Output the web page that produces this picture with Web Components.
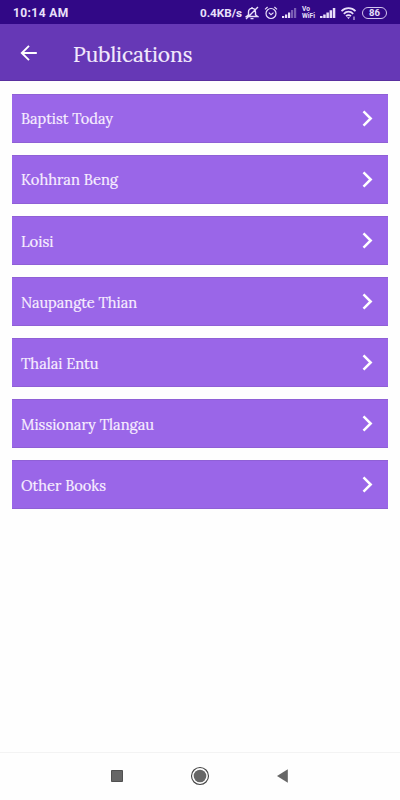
<!DOCTYPE html>
<html lang="en">
<head>
<meta charset="utf-8">
<title>Publications</title>
<style>
  body {
    margin: 0;
    background: #fefefe;
    font-family: Lora, "Liberation Serif", serif;
  }
</style>
</head>
<body>
<phone-screen>
  <status-bar slot="top" time="10:14 AM" speed="0.4KB/s" battery="86"></status-bar>
  <app-bar slot="top"><fit-text width="119.5">Publications</fit-text></app-bar>
  <list-item><fit-text width="92">Baptist Today</fit-text></list-item>
  <list-item><fit-text width="97">Kohhran Beng</fit-text></list-item>
  <list-item><fit-text width="32.5">Loisi</fit-text></list-item>
  <list-item><fit-text width="116">Naupangte Thian</fit-text></list-item>
  <list-item><fit-text width="77.5">Thalai Entu</fit-text></list-item>
  <list-item><fit-text width="133">Missionary Tlangau</fit-text></list-item>
  <list-item><fit-text width="85">Other Books</fit-text></list-item>
  <nav-bar slot="bottom"></nav-bar>
</phone-screen>

<script>
class PhoneScreen extends HTMLElement {
  constructor() {
    super();
    this.attachShadow({ mode: 'open' });
    this.shadowRoot.innerHTML = `
      <style>
        :host {
          display: flex;
          flex-direction: column;
          width: 400px;
          height: 800px;
          overflow: hidden;
        }
        main {
          flex: 1;
          display: flex;
          flex-direction: column;
          gap: 12.4px;
          padding: 13px 12px 0;
        }
      </style>
      <slot name="top"></slot>
      <main><slot></slot></main>
      <slot name="bottom"></slot>
    `;
  }
}

// Text stretched to a given width, so every label keeps its length
class FitText extends HTMLElement {
  constructor() {
    super();
    this.attachShadow({ mode: 'open' });
    this.shadowRoot.innerHTML = `
      <style>
        :host { display: block; white-space: nowrap; }
        span {
          display: inline-block;
          transform-origin: 0 50%;
          -webkit-text-stroke: 0.2px currentColor;
        }
      </style>
      <span><slot></slot></span>
    `;
  }

  connectedCallback() {
    const span = this.shadowRoot.querySelector('span');
    const width = Number(this.getAttribute('width'));
    const natural = span.getBoundingClientRect().width;
    if (width && natural) {
      span.style.transform = `scaleX(${width / natural})`;
    }
  }
}

class StatusBar extends HTMLElement {
  connectedCallback() {
    if (!this.shadowRoot) this.attachShadow({ mode: 'open' });
    this.render();
  }

  render() {
    const time = this.getAttribute('time');
    const speed = this.getAttribute('speed');
    const battery = this.getAttribute('battery');

    this.shadowRoot.innerHTML = `
      <style>
        :host {
          display: flex;
          align-items: center;
          justify-content: space-between;
          box-sizing: border-box;
          height: 24px;
          padding: 1px 13px 0;
          background: #310886;
          color: #e9e0fa;
          font: bold 12px Roboto, sans-serif;
        }
        .time { letter-spacing: 0.4px; }
        .icons { display: flex; align-items: center; }
        .speed { width: 45px; font-size: 11.7px; }
        svg { display: block; fill: none; stroke: currentColor; }
        .bell { margin-right: 5px; }
        .alarm { margin-right: 4px; }
        .signal { fill: currentColor; stroke: none; }
        .vo {
          display: flex;
          flex-direction: column;
          width: 15px;
          margin: 0 3px 0 5px;
          font-size: 6.6px;
          line-height: 7px;
        }
        .wifi { margin: 0 5px 0 4px; }
        .battery {
          box-sizing: border-box;
          width: 25px;
          height: 12px;
          border: 1px solid #d3c5ee;
          border-radius: 6px;
          font-size: 9.5px;
          line-height: 10px;
          text-align: center;
        }
      </style>
      <span class="time">${time}</span>
      <div class="icons">
        <span class="speed">${speed}</span>
        <svg class="bell" width="14" height="14" viewBox="0 0 14 14" stroke-width="1.4">
          <path d="M1.5 10.5 3.5 8.8V6c0-2 1.3-3.6 3.5-3.6S10.5 4 10.5 6v2.8l2 1.7zM5.5 12.6h3M7 1v1.5M1 13 13 1"/>
        </svg>
        <svg class="alarm" width="14" height="14" viewBox="0 0 14 14" stroke-width="1.2">
          <circle cx="7" cy="7.5" r="5"/>
          <path d="M1 3.4 3.6 1M13 3.4 10.4 1M4.8 6.6 7 8.6 9.5 6.6"/>
        </svg>
        <svg class="signal" width="15" height="12" viewBox="0 0 15 12">
          <path d="M0 9h2.2v2H0zM3 7.5h2.2V11H3zM6 5.5h2.2V11H6z"/>
          <path opacity=".4" d="M9 3h2.2v8H9zM12 1h2.2v10H12z"/>
        </svg>
        <div class="vo"><span>Vo</span><span>WiFi</span></div>
        <svg class="signal" width="16" height="12" viewBox="0 0 16 12">
          <path d="M0 9h2.5v2H0zM3.2 7.5h2.5V11H3.2zM6.4 5.5h2.5V11H6.4zM9.6 3.2h2.5V11H9.6zM12.8 1h2.5v10h-2.5z"/>
        </svg>
        <svg class="wifi" width="17" height="14" viewBox="0 0 17 14" stroke-width="1.7">
          <path d="M1.5 5.2c4-4 10-4 14 0M3.8 7.8c2.8-2.8 6.6-2.8 9.4 0M6 10.2c1.5-1.4 3.5-1.4 5 0"/>
          <path d="M7 11.3h3L8.5 13zM13.5 10.5h1V14h-1z" fill="currentColor" stroke="none"/>
        </svg>
        <span class="battery">${battery}</span>
      </div>
    `;
  }
}

class AppBar extends HTMLElement {
  constructor() {
    super();
    this.attachShadow({ mode: 'open' });
    this.shadowRoot.innerHTML = `
      <style>
        :host {
          display: flex;
          align-items: center;
          gap: 36px;
          box-sizing: border-box;
          height: 57px;
          padding: 1px 20px 0;
          background: #6638b6;
          border-bottom: 1px solid #59309f;
          color: #f3ebfd;
          font-size: 21.5px;
        }
        svg { display: block; }
        slot { display: block; padding-top: 2px; }
      </style>
      <svg width="17" height="16" viewBox="0 0 17 16" fill="none" stroke="#fff" stroke-width="1.9">
        <path d="M16.8 8H2M9 .8 1.8 8 9 15.2"/>
      </svg>
      <slot></slot>
    `;
  }
}

class ListItem extends HTMLElement {
  constructor() {
    super();
    this.attachShadow({ mode: 'open' });
    this.shadowRoot.innerHTML = `
      <style>
        :host {
          display: flex;
          align-items: center;
          justify-content: space-between;
          box-sizing: border-box;
          height: 48.7px;
          padding: 0 15.5px 0 8.5px;
          background: #9a66e8;
          border: 1px solid #8f60d6;
          border-width: 1px 0;
          color: #f8efff;
          font-size: 15px;
        }
        svg { display: block; }
        slot { display: block; padding-top: 1px; }
      </style>
      <slot></slot>
      <svg width="11" height="17" viewBox="0 0 11 17" fill="none" stroke="#fff" stroke-width="2.5">
        <path d="M1.5 1.3 8.7 8.5 1.5 15.7"/>
      </svg>
    `;
  }
}

class NavBar extends HTMLElement {
  constructor() {
    super();
    this.attachShadow({ mode: 'open' });
    this.shadowRoot.innerHTML = `
      <style>
        :host {
          display: flex;
          align-items: center;
          justify-content: center;
          gap: 67px;
          box-sizing: border-box;
          height: 48px;
          padding-bottom: 1px;
          border-top: 1px solid #f3f3f3;
        }
        svg { display: block; fill: #666; }
      </style>
      <svg width="12" height="12"><path d="M.5 .5h11v11H.5z" stroke="#505050"/></svg>
      <svg width="20" height="20">
        <circle cx="10" cy="10" r="8.5" fill="none" stroke="#444" stroke-width="1.1"/>
        <circle cx="10" cy="10" r="6.3"/>
      </svg>
      <svg width="12" height="14"><path d="M10.8 .3v13.400L0 7z"/></svg>
    `;
  }
}

customElements.define('phone-screen', PhoneScreen);
customElements.define('status-bar', StatusBar);
customElements.define('app-bar', AppBar);
customElements.define('list-item', ListItem);
customElements.define('nav-bar', NavBar);
// last, so the text is measured inside its finished parents
customElements.define('fit-text', FitText);
</script>
</body>
</html>
